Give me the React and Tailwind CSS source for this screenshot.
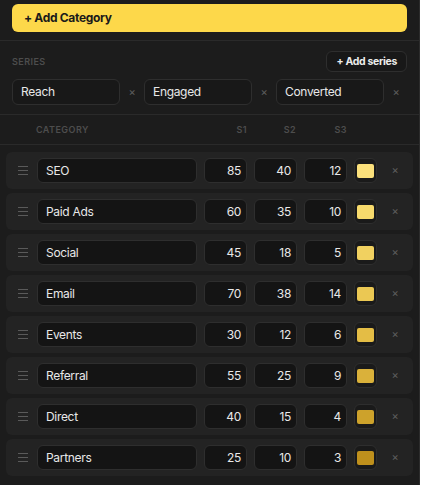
import { useState } from "react";

const initialRows = [
  { name: "SEO", s1: 85, s2: 40, s3: 12, color: "#fbe07b" },
  { name: "Paid Ads", s1: 60, s2: 35, s3: 10, color: "#f7da6c" },
  { name: "Social", s1: 45, s2: 18, s3: 5, color: "#f1d160" },
  { name: "Email", s1: 70, s2: 38, s3: 14, color: "#ebc853" },
  { name: "Events", s1: 30, s2: 12, s3: 6, color: "#e4bd45" },
  { name: "Referral", s1: 55, s2: 25, s3: 9, color: "#dab13a" },
  { name: "Direct", s1: 40, s2: 15, s3: 4, color: "#cda22b" },
  { name: "Partners", s1: 25, s2: 10, s3: 3, color: "#bf901c" },
];

const series = ["Reach", "Engaged", "Converted"];

const DragHandle = () => (
  <svg width="10" height="9" viewBox="0 0 10 9" className="text-[#5a5a5a]">
    <path d="M0 0.5H10M0 4.5H10M0 8.5H10" stroke="currentColor" strokeWidth="1" />
  </svg>
);

const Cross = () => (
  <span className="text-[11px] leading-none text-[#5f5f5f]">×</span>
);

export default function App() {
  const [rows] = useState(initialRows);

  return (
    <div
      className="w-[420px] min-h-[485px] bg-[#1c1c1c] border-r border-[#2c2c2c] text-[#e8e8e8] tracking-[-0.02em]"
      style={{ fontFamily: "Inter, 'Noto Sans', sans-serif" }}
    >
      <div className="px-3 pt-1 pb-2 border-b border-[#2a2a2a]">
        <button
          type="button"
          className="w-full h-[28px] rounded-md bg-[#fdd84a] text-[#1a1a1a] text-[12px] font-bold text-left pl-3"
        >
          + Add Category
        </button>
      </div>

      <div className="px-3 pt-[10px] pb-[9px] border-b border-[#2a2a2a]">
        <div className="flex items-center justify-between">
          <span className="text-[9px] tracking-wider font-semibold text-[#4d4d4d]">
            SERIES
          </span>
          <button
            type="button"
            className="h-[21px] px-[9px] rounded-md border border-[#2e2e2e] bg-[#181818] text-[10.5px] font-bold text-[#ececec]"
          >
            + Add series
          </button>
        </div>
        <div className="mt-[7px] flex items-center">
          {series.map((s) => (
            <div key={s} className="flex items-center">
              <div className="w-[108px] h-[26px] rounded-md border border-[#2e2e2e] bg-[#181818] flex items-center pl-2 text-[12px]">
                {s}
              </div>
              <div className="w-[24px] flex justify-center">
                <Cross />
              </div>
            </div>
          ))}
        </div>
      </div>

      <div className="h-[30px] flex items-center border-b border-[#2a2a2a] text-[9px] tracking-wider font-semibold text-[#4d4d4d]">
        <span className="ml-[36px] w-[168px]">CATEGORY</span>
        <span className="w-[43px] text-right">S1</span>
        <span className="ml-[7px] w-[43px] text-right pr-[1px]">S2</span>
        <span className="ml-[7px] w-[43px] text-right">S3</span>
      </div>

      <div className="px-1.5 pt-[7px] flex flex-col gap-1">
        {rows.map((r) => (
          <div
            key={r.name}
            className="h-[37px] rounded-md bg-[#232323] flex items-center pl-[12px]"
          >
            <div className="w-[10px] shrink-0 flex justify-center">
              <DragHandle />
            </div>
            <div className="ml-[9px] w-[160px] shrink-0 h-[25px] rounded-md border border-[#2e2e2e] bg-[#141414] flex items-center pl-2 text-[12px]">
              {r.name}
            </div>
            {[r.s1, r.s2, r.s3].map((v, i) => (
              <div
                key={i}
                className="ml-[7px] w-[43px] shrink-0 h-[25px] rounded-md border border-[#2e2e2e] bg-[#141414] flex items-center justify-end pr-[5px] text-[12px]"
              >
                {v}
              </div>
            ))}
            <div className="ml-[7px] w-[23px] shrink-0 h-[25px] rounded-md border border-[#2e2e2e] bg-[#1a1a1a] flex items-center justify-center">
              <div
                className="w-[17px] h-[14px] shrink-0 rounded-[2px]"
                style={{ backgroundColor: r.color }}
              />
            </div>
            <div className="ml-[12px] w-[12px] shrink-0 flex justify-center">
              <Cross />
            </div>
          </div>
        ))}
      </div>
    </div>
  );
}
